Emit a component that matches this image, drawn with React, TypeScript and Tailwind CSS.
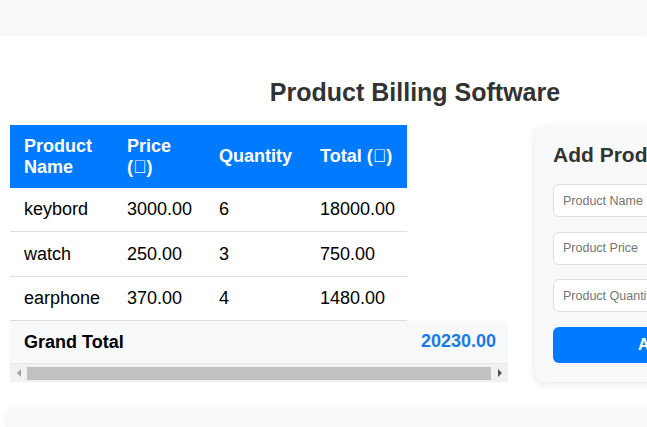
import React from 'react';

const items = [
  { name: 'keybord', price: '3000.00', qty: '6', total: '18000.00' },
  { name: 'watch', price: '250.00', qty: '3', total: '750.00' },
  { name: 'earphone', price: '370.00', qty: '4', total: '1480.00' },
];

function FakeScrollbar() {
  return (
    <div className="flex h-[18px] items-center bg-[#f1f1f1]">
      <div className="flex w-[17px] justify-center">
        <div className="h-0 w-0 border-y-[4px] border-r-[4px] border-y-transparent border-r-[#a3a3a3]" />
      </div>
      <div className="h-[13px] flex-1 bg-[#c1c1c1]" />
      <div className="flex w-[17px] justify-center">
        <div className="h-0 w-0 border-y-[4px] border-l-[4px] border-y-transparent border-l-[#505050]" />
      </div>
    </div>
  );
}

export default function App() {
  return (
    <div className="h-[427px] w-full overflow-hidden bg-white font-['Liberation_Sans',Arial,sans-serif] text-[#333]">
      <div className="h-[34px] bg-[#f8f9fa] shadow-[0_1px_3px_rgba(0,0,0,0.06)]" />

      <div className="w-[830px]">
        <h1 className="mt-[44px] mb-[18px] text-center text-[25px] font-bold leading-[29px] text-[#333]">
          Product Billing Software
        </h1>

        <div className="flex items-start pl-[10px]">
          <div className="w-[498px]">
            <div className="overflow-hidden">
              <table className="w-[498px] table-fixed border-collapse text-left text-[18px] leading-[21px] text-black">
                <colgroup>
                  <col className="w-[103px]" />
                  <col className="w-[92px]" />
                  <col className="w-[101px]" />
                  <col className="w-[101px]" />
                  <col className="w-[101px]" />
                </colgroup>
                <thead>
                  <tr className="text-white">
                    <th className="bg-[#007bff] px-[14px] py-[10.5px] align-middle font-bold">Product Name</th>
                    <th className="bg-[#007bff] px-[14px] py-[10.5px] align-middle font-bold">Price (&#xE000;)</th>
                    <th className="bg-[#007bff] px-[14px] py-[10.5px] align-middle font-bold">Quantity</th>
                    <th className="whitespace-nowrap bg-[#007bff] px-[14px] py-[10.5px] align-middle font-bold">Total (&#xE000;)</th>
                  </tr>
                </thead>
                <tbody>
                  {items.map((item, index) => (
                    <tr key={index}>
                      <td className="border-b border-[#dddddd] px-[14px] py-[11.2px]">{item.name}</td>
                      <td className="border-b border-[#dddddd] px-[14px] py-[11.2px]">{item.price}</td>
                      <td className="border-b border-[#dddddd] px-[14px] py-[11.2px]">{item.qty}</td>
                      <td className="border-b border-[#dddddd] px-[14px] py-[11.2px]">{item.total}</td>
                    </tr>
                  ))}
                </tbody>
                <tfoot>
                  <tr className="bg-[#f8f9fa]">
                    <td colSpan={4} className="border-b border-[#e6e6e6] px-[14px] py-[10.5px] font-bold">
                      Grand Total
                    </td>
                    <td className="border-b border-[#e6e6e6] px-[14px] py-[10.5px] font-bold text-[#1a7be6]">
                      20230.00
                    </td>
                  </tr>
                </tfoot>
              </table>
            </div>
            <FakeScrollbar />
          </div>

          <div className="ml-[27px] mt-[1px] w-[302px] shrink-0 rounded-lg bg-[#f8f9fa] px-[18px] pt-[17px] pb-[19px] shadow-[0_2px_8px_rgba(0,0,0,0.1)]">
            <h2 className="mb-[17px] whitespace-nowrap text-[21px] font-bold leading-[24px] text-[#333]">Add Product</h2>
            <div className="flex flex-col gap-[14.5px]">
              <input
                placeholder="Product Name"
                className="h-[33px] rounded-md border border-[#dddddd] bg-white px-[9px] text-[12.5px] placeholder:text-[#757575]"
              />
              <input
                placeholder="Product Price"
                className="h-[33px] rounded-md border border-[#dddddd] bg-white px-[9px] text-[12.5px] placeholder:text-[#757575]"
              />
              <input
                placeholder="Product Quantity"
                className="h-[33px] rounded-md border border-[#dddddd] bg-white px-[9px] text-[12.5px] placeholder:text-[#757575]"
              />
              <button className="h-[36px] rounded-md bg-[#007bff] text-[16px] font-bold text-white">Add Product</button>
            </div>
          </div>
        </div>

        <div className="ml-[8px] mt-[26px] h-[60px] rounded-lg bg-[#f8f9fa] shadow-[0_2px_8px_rgba(0,0,0,0.08)]" />
      </div>
    </div>
  );
}
